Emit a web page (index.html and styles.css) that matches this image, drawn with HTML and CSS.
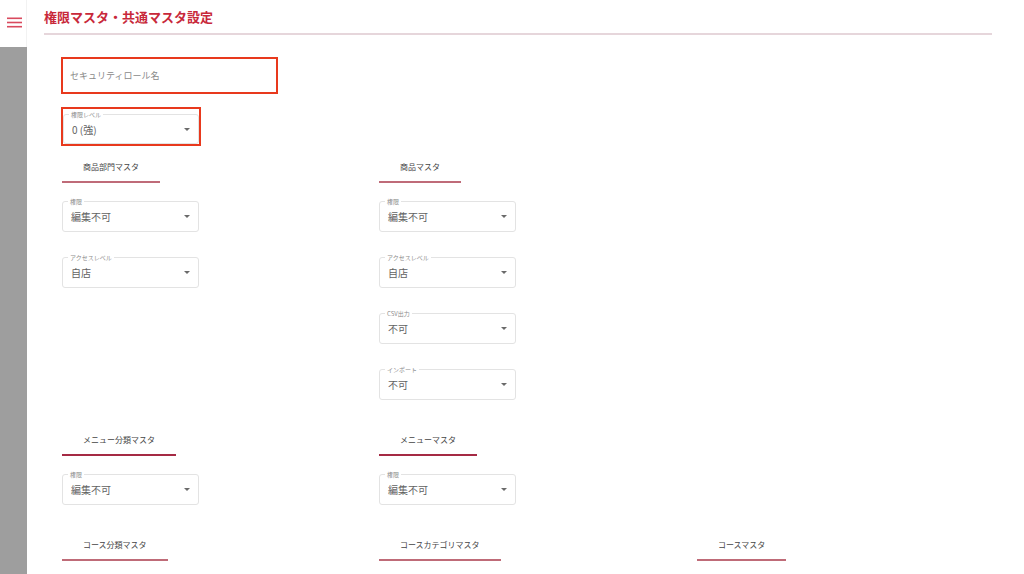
FILE: index.html
```html
<!DOCTYPE html>
<html lang="ja">
<head>
    <meta charset="UTF-8">
    <meta name="viewport" content="width=device-width, initial-scale=1.0">
    <title>権限マスタ・共通マスタ設定</title>
    <link rel="stylesheet" href="styles.css">
</head>
<body>
    <aside class="sidebar">
        <div class="sidebar-top">
            <svg class="menu-icon" width="15" height="11" viewBox="0 0 15 11">
                <rect x="0" y="0.5" width="15" height="1.6" fill="#d94a5e"/>
                <rect x="0" y="4.7" width="15" height="1.6" fill="#d94a5e"/>
                <rect x="0" y="8.9" width="15" height="1.6" fill="#d94a5e"/>
            </svg>
        </div>
        <div class="sidebar-rail"></div>
    </aside>

    <main class="main">
        <h1 class="page-title">権限マスタ・共通マスタ設定</h1>

        <div class="form">
            <div class="highlight role-name">
                <span class="placeholder">セキュリティロール名</span>
            </div>

            <div class="highlight level-box">
                <div class="select level-select">
                    <span class="select-label">権限レベル</span>
                    <span class="select-value">0 (強)</span>
                    <span class="arrow"></span>
                </div>
            </div>

            <div class="section-row">
                <section class="section">
                    <div class="tab">商品部門マスタ</div>
                    <div class="fields">
                        <div class="select">
                            <span class="select-label">権限</span>
                            <span class="select-value">編集不可</span>
                            <span class="arrow"></span>
                        </div>
                        <div class="select">
                            <span class="select-label">アクセスレベル</span>
                            <span class="select-value">自店</span>
                            <span class="arrow"></span>
                        </div>
                    </div>
                </section>
                <section class="section">
                    <div class="tab">商品マスタ</div>
                    <div class="fields">
                        <div class="select">
                            <span class="select-label">権限</span>
                            <span class="select-value">編集不可</span>
                            <span class="arrow"></span>
                        </div>
                        <div class="select">
                            <span class="select-label">アクセスレベル</span>
                            <span class="select-value">自店</span>
                            <span class="arrow"></span>
                        </div>
                        <div class="select">
                            <span class="select-label">CSV出力</span>
                            <span class="select-value">不可</span>
                            <span class="arrow"></span>
                        </div>
                        <div class="select">
                            <span class="select-label">インポート</span>
                            <span class="select-value">不可</span>
                            <span class="arrow"></span>
                        </div>
                    </div>
                </section>
                <div></div>
            </div>

            <div class="section-row">
                <section class="section">
                    <div class="tab tab-dark">メニュー分類マスタ</div>
                    <div class="fields">
                        <div class="select">
                            <span class="select-label">権限</span>
                            <span class="select-value">編集不可</span>
                            <span class="arrow"></span>
                        </div>
                    </div>
                </section>
                <section class="section">
                    <div class="tab tab-dark">メニューマスタ</div>
                    <div class="fields">
                        <div class="select">
                            <span class="select-label">権限</span>
                            <span class="select-value">編集不可</span>
                            <span class="arrow"></span>
                        </div>
                    </div>
                </section>
                <div></div>
            </div>

            <div class="section-row">
                <section class="section">
                    <div class="tab">コース分類マスタ</div>
                </section>
                <section class="section">
                    <div class="tab">コースカテゴリマスタ</div>
                </section>
                <section class="section">
                    <div class="tab">コースマスタ</div>
                </section>
            </div>
        </div>
    </main>
</body>
</html>
```

FILE: styles.css
```css
* {
    margin: 0;
    padding: 0;
    box-sizing: border-box;
}

body {
    display: flex;
    height: 100vh;
    overflow: hidden;
    background: #ffffff;
    color: #555;
    font-family: 'Noto Sans CJK JP', 'Noto Sans', Roboto, sans-serif;
}

/* Sidebar */
.sidebar {
    width: 27px;
    flex-shrink: 0;
    display: flex;
    flex-direction: column;
}

.sidebar-top {
    height: 47px;
    display: flex;
    justify-content: center;
    padding-top: 17px;
    padding-left: 2px;
    border-right: 1px solid #f2f2f2;
}

.sidebar-rail {
    flex: 1;
    background: #9e9e9e;
}

/* Main */
.main {
    flex: 1;
    min-width: 0;
    padding: 0 32px 0 17px;
}

.page-title {
    height: 35px;
    line-height: 33px;
    font-size: 13px;
    font-weight: 700;
    color: #c8283a;
    border-bottom: 2px solid #e6d6db;
}

.form {
    padding-left: 17px;
}

.highlight {
    border: 2px solid #e8391d;
}

.role-name {
    width: 217px;
    height: 37px;
    margin-top: 22px;
    display: flex;
    align-items: center;
    padding-left: 7px;
}

.placeholder {
    font-size: 9px;
    color: #8a8a8a;
}

.level-box {
    width: 140px;
    height: 39px;
    margin-top: 13px;
    padding-top: 5px;
}

/* Outlined select */
.select {
    position: relative;
    width: 137px;
    height: 31px;
    border: 1px solid #e3e3e3;
    border-radius: 3px;
    display: flex;
    align-items: center;
    padding: 0 8px;
}

.level-select {
    width: 136px;
    height: 30px;
}

.select-label {
    position: absolute;
    top: -4px;
    left: 5px;
    padding: 0 2px;
    font-size: 6px;
    line-height: 8px;
    color: #8c8c8c;
    background: #ffffff;
}

.select-value {
    font-size: 10px;
    color: #626262;
}

.arrow {
    margin-left: auto;
    width: 0;
    height: 0;
    border-left: 3px solid transparent;
    border-right: 3px solid transparent;
    border-top: 3px solid #6a6a6a;
}

/* Sections */
.section-row {
    display: grid;
    grid-template-columns: 317px 318px 1fr;
    align-items: start;
    padding-left: 1px;
    margin-top: 30px;
}

.level-box + .section-row {
    margin-top: 11px;
}

.section {
    display: flex;
    flex-direction: column;
    align-items: flex-start;
}

.tab {
    font-size: 8px;
    line-height: 12px;
    color: #444;
    padding: 4px 21px 8px;
    border-bottom: 2px solid #bf6b78;
}

.tab-dark {
    border-bottom-color: #a52a44;
}

.fields {
    display: flex;
    flex-direction: column;
    gap: 25px;
    margin-top: 18px;
}
```
